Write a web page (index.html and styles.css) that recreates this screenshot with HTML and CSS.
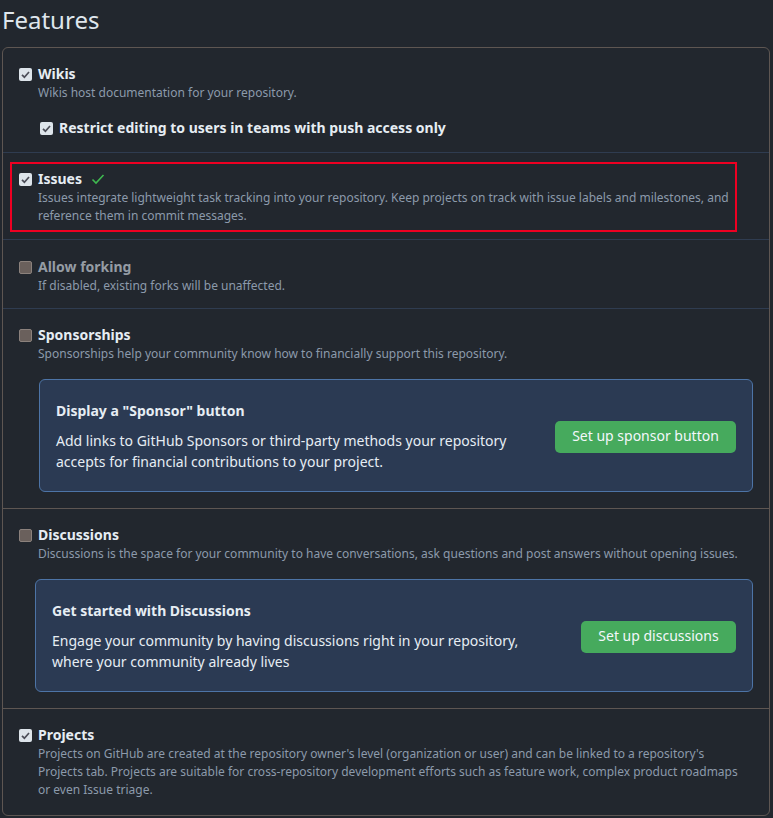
FILE: index.html
```html
<!DOCTYPE html>
<html>
<head>
<meta charset="utf-8">
<link rel="stylesheet" href="styles.css">
</head>
<body>
<h2 class="page-title">Features</h2>
<div class="features">
  <section class="feature feature-first">
    <div class="option">
      <span class="cb cb-on"><svg viewBox="0 0 13 13"><path d="M3 6.8l2.4 2.4L10 4" /></svg></span>
      <div class="option-body">
        <div class="label">Wikis</div>
        <div class="note">Wikis host documentation for your repository.</div>
      </div>
    </div>
    <div class="option sub-option">
      <span class="cb cb-on"><svg viewBox="0 0 13 13"><path d="M3 6.8l2.4 2.4L10 4" /></svg></span>
      <div class="option-body">
        <div class="label">Restrict editing to users in teams with push access only</div>
      </div>
    </div>
  </section>

  <section class="feature feature-highlight">
    <div class="highlight">
      <div class="option">
        <span class="cb cb-on"><svg viewBox="0 0 13 13"><path d="M3 6.8l2.4 2.4L10 4" /></svg></span>
        <div class="option-body">
          <div class="label">Issues <svg class="ok" viewBox="0 0 14 12"><path d="M1.5 6.5l3.5 3.5L12.5 2" /></svg></div>
          <div class="note">Issues integrate lightweight task tracking into your repository. Keep projects on track with issue labels and milestones, and reference them in commit messages.</div>
        </div>
      </div>
    </div>
  </section>

  <section class="feature feature-forking">
    <div class="option">
      <span class="cb cb-off"></span>
      <div class="option-body">
        <div class="label label-disabled">Allow forking</div>
        <div class="note">If disabled, existing forks will be unaffected.</div>
      </div>
    </div>
  </section>

  <section class="feature feature-warm-bottom">
    <div class="option">
      <span class="cb cb-off"></span>
      <div class="option-body">
        <div class="label">Sponsorships</div>
        <div class="note">Sponsorships help your community know how to financially support this repository.</div>
      </div>
    </div>
    <div class="promo promo-sponsor">
      <div class="promo-text">
        <div class="promo-title">Display a "Sponsor" button</div>
        <p class="promo-desc">Add links to GitHub Sponsors or third-party methods your repository accepts for financial contributions to your project.</p>
      </div>
      <button class="btn-green btn-sponsor">Set up sponsor button</button>
    </div>
  </section>

  <section class="feature feature-warm-bottom">
    <div class="option">
      <span class="cb cb-off"></span>
      <div class="option-body">
        <div class="label">Discussions</div>
        <div class="note">Discussions is the space for your community to have conversations, ask questions and post answers without opening issues.</div>
      </div>
    </div>
    <div class="promo promo-discuss">
      <div class="promo-text">
        <div class="promo-title">Get started with Discussions</div>
        <p class="promo-desc">Engage your community by having discussions right in your repository, where your community already lives</p>
      </div>
      <button class="btn-green btn-discuss">Set up discussions</button>
    </div>
  </section>

  <section class="feature feature-last">
    <div class="option">
      <span class="cb cb-on"><svg viewBox="0 0 13 13"><path d="M3 6.8l2.4 2.4L10 4" /></svg></span>
      <div class="option-body">
        <div class="label">Projects</div>
        <div class="note">Projects on GitHub are created at the repository owner's level (organization or user) and can be linked to a repository's Projects tab. Projects are suitable for cross-repository development efforts such as feature work, complex product roadmaps or even Issue triage.</div>
      </div>
    </div>
  </section>
</div>
</body>
</html>
```

FILE: styles.css
```css
html, body {
  margin: 0;
  padding: 0;
  background: #22272e;
}

body {
  font-family: "Noto Sans", "Open Sans", sans-serif;
  color: #dfe6ec;
  padding: 0 3px 0 2px;
}

.page-title {
  margin: 0;
  padding-top: 4px;
  height: 43px;
  font-size: 24px;
  font-weight: 400;
  line-height: 32px;
  color: #dfe6ec;
}

.features {
  border: 1px solid #5e5652;
  border-radius: 6px;
}

.feature {
  padding: 16px 24px 14px 16px;
  border-top: 1px solid #2f3c50;
}

.feature-first {
  border-top: none;
  padding-top: 16px;
  padding-bottom: 14px;
}

.feature-forking {
  padding-top: 17px;
  padding-bottom: 13px;
}

.feature-warm-bottom + .feature {
  border-top-color: #5e5652;
}

.feature-last {
  padding-bottom: 16px;
}

.option {
  display: flex;
  align-items: flex-start;
  gap: 6px;
}

.cb {
  flex: none;
  width: 13px;
  height: 13px;
  margin-top: 4px;
  box-sizing: border-box;
  border-radius: 2px;
  display: flex;
}

.cb svg {
  width: 13px;
  height: 13px;
}

.cb svg path {
  fill: none;
  stroke: #4b4d57;
  stroke-width: 1.7;
}

.cb-on {
  background: #dde4ea;
}

.cb-off {
  background: #6a605c;
  border: 1px solid #8b817c;
}

.option-body {
  flex: 1;
  min-width: 0;
}

.label {
  font-size: 14px;
  font-weight: 700;
  line-height: 20px;
  color: #e6edf3;
  display: flex;
  align-items: center;
}

.label-disabled {
  color: #959ca4;
}

.note {
  font-size: 12px;
  line-height: 18px;
  color: #8c9aab;
}

.sub-option {
  margin-top: 16px;
  padding-left: 21px;
}

.ok {
  width: 14px;
  height: 12px;
  margin-left: 9px;
}

.ok path {
  fill: none;
  stroke: #3fb950;
  stroke-width: 1.6;
}

.feature-highlight {
  padding: 9px 32px 7px 7px;
}

.highlight {
  border: 2px solid #ee0022;
  padding: 5px 2px 5px 7px;
}

.promo {
  display: flex;
  align-items: center;
  justify-content: space-between;
  gap: 16px;
  margin-top: 16px;
  margin-right: -8px;
  background: #2b3a53;
  border: 1px solid #4d74a6;
  border-radius: 6px;
  padding: 21px 16px 19px 16px;
  color: #e6edf3;
}

.promo-sponsor {
  margin-left: 20px;
}

.promo-discuss {
  margin-left: 16px;
}

.feature-warm-bottom {
  padding-bottom: 16px;
}

.promo-title {
  font-size: 14px;
  font-weight: 700;
  line-height: 20px;
}

.promo-desc {
  margin: 9px 0 0 0;
  font-size: 14px;
  line-height: 21px;
}

.btn-green {
  flex: none;
  box-sizing: border-box;
  height: 32px;
  padding: 0 16px 3px 16px;
  border: none;
  border-radius: 5px;
  background: #46aa5d;
  color: #f3f7fb;
  font-family: "Noto Sans", "Open Sans", sans-serif;
  font-size: 14px;
  line-height: 29px;
}

.btn-sponsor {
  width: 181px;
}

.btn-discuss {
  width: 155px;
}

.promo-sponsor .promo-text {
  max-width: 470px;
}

.promo-discuss .promo-text {
  max-width: 480px;
}
```
